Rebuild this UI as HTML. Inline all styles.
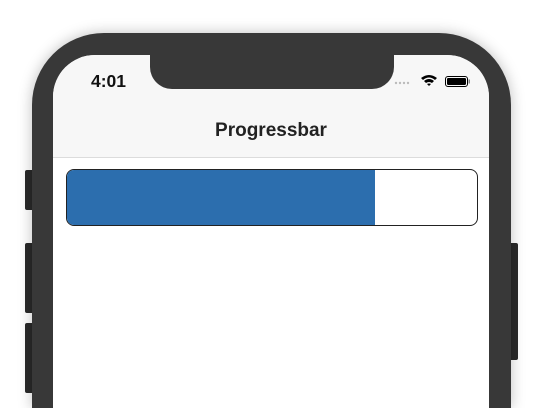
<!DOCTYPE html>
<html><head><style>
html,body{margin:0;padding:0;width:545px;height:408px;overflow:hidden}
body{background:#fff;font-family:"Liberation Sans",sans-serif}
#wrap{position:relative;width:545px;height:408px;overflow:hidden}
.abs{position:absolute}
.body{left:32px;top:33px;width:479px;height:375px;background:#383838;border-radius:72px 72px 0 0;box-shadow:0 0 14px rgba(0,0,0,.25)}
.screen{left:53px;top:55px;width:436px;height:353px;background:#fff;border-radius:42px 42px 0 0;overflow:hidden}
.nav{left:0;top:0;width:436px;height:102px;background:#f7f7f7;border-bottom:1px solid #dcdcdc}
.notch{left:150px;top:40px;width:244px;height:49px;background:#383838;border-radius:0 0 22px 22px}
.btn{background:#2a2a2a;border-radius:2px}
</style></head><body><div id="wrap">
<div class="abs btn" style="left:25px;top:170px;width:9px;height:40px"></div>
<div class="abs btn" style="left:25px;top:243px;width:9px;height:70px"></div>
<div class="abs btn" style="left:25px;top:323px;width:9px;height:70px"></div>
<div class="abs btn" style="left:509px;top:243px;width:9px;height:117px"></div>
<div class="abs body"></div>
<div class="abs screen">
 <div class="abs nav"></div>
 <div class="abs" style="left:38px;top:16px;font-size:17.5px;font-weight:bold;color:#111">4:01</div>
 <div class="abs" style="left:0;width:436px;top:65px;text-align:center;font-size:19px;font-weight:bold;color:#222">Progressbar</div>
 <div class="abs" style="left:13px;top:114px;width:410px;height:55px;border:1px solid #222;border-radius:8px;overflow:hidden;background:#fff">
  <div style="width:308px;height:100%;background:#2c6eae"></div>
 </div>
</div>
<div class="abs notch"></div>
<svg class="abs" style="left:393px;top:73px" width="80" height="16">
 <g fill="#bbb"><circle cx="3" cy="10" r="1.2"/><circle cx="7" cy="10" r="1.2"/><circle cx="11" cy="10" r="1.2"/><circle cx="15" cy="10" r="1.2"/></g>
 <path d="M28 5 Q36 -1 44 5 L42 7 Q36 2 30 7Z M31 8 Q36 4 41 8 L39 10 Q36 8 33 10Z M34 11 L36 13 L38 11 Q36 10 34 11Z" fill="#000"/>
 <rect x="52.5" y="3.5" width="22" height="10" rx="2.5" fill="none" stroke="#000" stroke-width="1"/>
 <rect x="54" y="5" width="19" height="7" rx="1.2" fill="#000"/>
 <rect x="75.5" y="6.5" width="1.5" height="4" fill="#888"/>
</svg>
</div></body></html>
